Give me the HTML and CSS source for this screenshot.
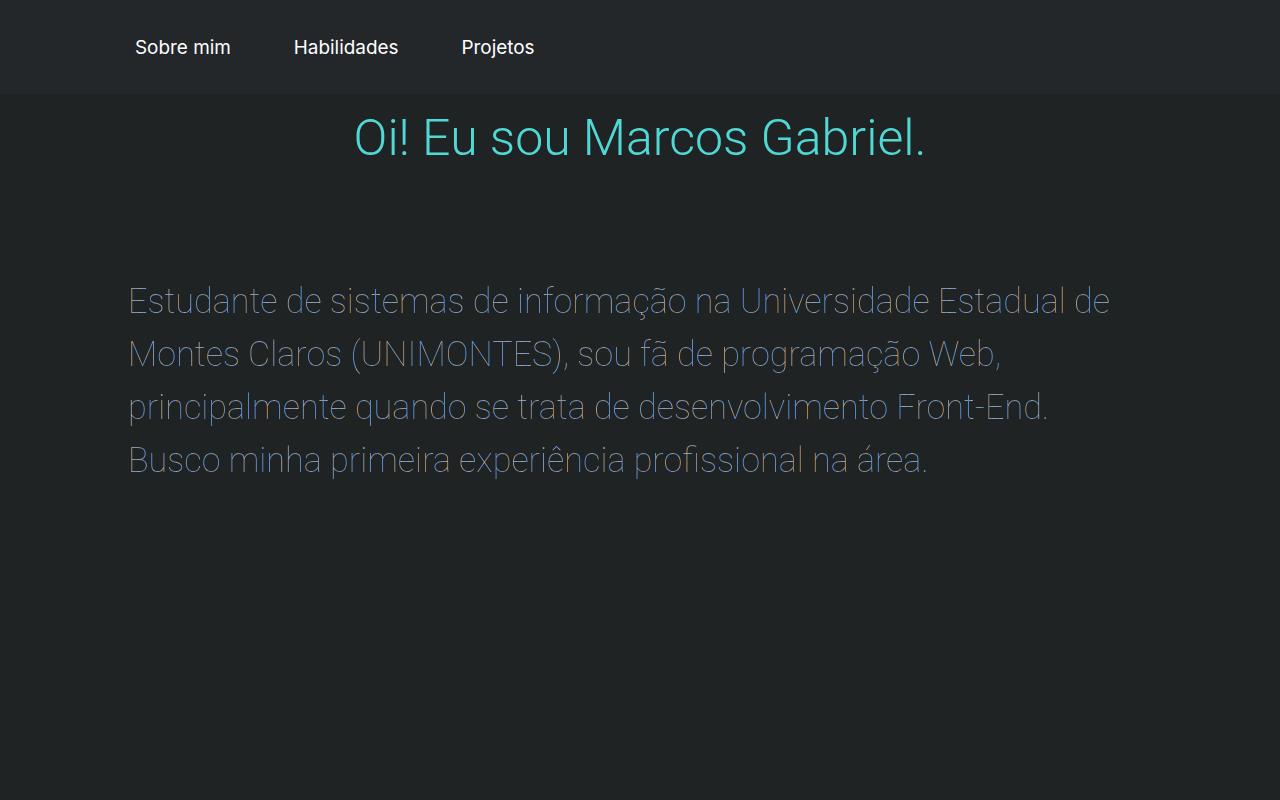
FILE: index.html
```html
<!DOCTYPE html>
<html lang="pt-BR">
<head>
<meta charset="utf-8">
<title>Marcos Gabriel</title>
<link rel="stylesheet" href="styles.css">
</head>
<body>
<header class="topbar">
  <nav class="nav">
    <a class="nav-link" href="#sobre">Sobre mim</a>
    <a class="nav-link" href="#habilidades">Habilidades</a>
    <a class="nav-link" href="#projetos">Projetos</a>
  </nav>
</header>
<main class="content">
  <h1 class="title">Oi! Eu sou Marcos Gabriel.</h1>
  <p class="intro">Estudante de sistemas de informação na Universidade Estadual de Montes Claros (UNIMONTES), sou fã de programação Web, principalmente quando se trata de desenvolvimento Front-End. Busco minha primeira experiência profissional na área.</p>
</main>
</body>
</html>
```

FILE: styles.css
```css
* { box-sizing: border-box; }
html, body { margin: 0; padding: 0; }
body {
  background: #202324;
  font-family: Inter, "Noto Sans", sans-serif;
  min-height: 800px;
}
.topbar {
  background: #232729;
  height: 94px;
}
.nav {
  width: 1024px;
  margin: 0 auto;
  height: 94px;
  display: flex;
  align-items: center;
  gap: 63px;
  padding-left: 7px;
}
.nav-link {
  color: #ffffff;
  text-decoration: none;
  font-size: 18.9px;
  font-weight: 400;
}
.content {
  width: 1024px;
  margin: 0 auto;
}
.title {
  margin: 0;
  padding-top: 15px;
  text-align: center;
  color: #4fd8d5;
  font-family: Roboto, "Noto Sans", sans-serif;
  font-size: 50px;
  font-weight: 300;
}
.intro {
  margin: 108px 0 0;
  max-width: 1000px;
  font-family: Roboto, "Noto Sans", sans-serif;
  font-size: 34.2px;
  line-height: 53px;
  font-weight: 100;
  color: transparent;
  background: repeating-linear-gradient(90deg, #5b94e0 0px, #6d9ad6 2.5px, #a8a8a6 3.5px, #c8924f 4.5px, #a89070 5.5px, #6d9ad6 6.5px, #5b94e0 7.5px);
  -webkit-background-clip: text;
  background-clip: text;
}
```
